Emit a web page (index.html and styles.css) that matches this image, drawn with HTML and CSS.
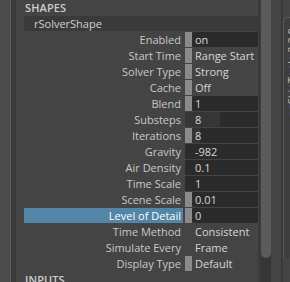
FILE: index.html
```html
<!DOCTYPE html>
<html>
<head>
<meta charset="utf-8">
<link rel="stylesheet" href="styles.css">
</head>
<body>
<div class="app">
  <div class="edge"></div>
  <div class="gutter"></div>
  <div class="panel">
    <div class="section-title">SHAPES</div>
    <div class="node-bar">rSolverShape</div>
    <div class="attrs">
      <div class="row"><span class="label">Enabled</span><span class="val"><span class="sw"></span><span class="field">on</span></span></div>
      <div class="row"><span class="label">Start Time</span><span class="val"><span class="sw"></span><span class="plain">Range Start</span></span></div>
      <div class="row"><span class="label">Solver Type</span><span class="val"><span class="sw"></span><span class="plain">Strong</span></span></div>
      <div class="row"><span class="label">Cache</span><span class="val"><span class="sw"></span><span class="plain">Off</span></span></div>
      <div class="row"><span class="label">Blend</span><span class="val"><span class="sw"></span><span class="field">1</span></span></div>
      <div class="row"><span class="label">Substeps</span><span class="val"><span class="field wide"><span class="fill" style="width:35px"></span><span class="txt">8</span></span></span></div>
      <div class="row"><span class="label">Iterations</span><span class="val"><span class="sw"></span><span class="field"><span class="fill" style="width:8px"></span><span class="txt">8</span></span></span></div>
      <div class="row"><span class="label">Gravity</span><span class="val"><span class="field wide">-982</span></span></div>
      <div class="row"><span class="label">Air Density</span><span class="val"><span class="field wide">0.1</span></span></div>
      <div class="row"><span class="label">Time Scale</span><span class="val"><span class="field wide">1</span></span></div>
      <div class="row"><span class="label">Scene Scale</span><span class="val"><span class="sw"></span><span class="field">0.01</span></span></div>
      <div class="row selected"><span class="label">Level of Detail</span><span class="val"><span class="sw"></span><span class="field">0</span></span></div>
      <div class="row"><span class="label">Time Method</span><span class="val"><span class="plain wide">Consistent</span></span></div>
      <div class="row"><span class="label">Simulate Every</span><span class="val"><span class="plain wide">Frame</span></span></div>
      <div class="row"><span class="label">Display Type</span><span class="val"><span class="sw"></span><span class="plain">Default</span></span></div>
    </div>
    <div class="section-title">INPUTS</div>
  </div>
  <div class="scroll"><div class="thumb"></div></div>
  <div class="spacer"></div>
  <div class="sep"></div>
  <div class="tabs"><div class="tab"><span class="tab-text">ngSkinTools 2.2.0</span></div></div>
</div>
</body>
</html>
```

FILE: styles.css
```css
html, body {
  margin: 0;
  padding: 0;
  background: #444444;
  overflow: hidden;
}
body {
  width: 290px;
  height: 282px;
  font-family: "Open Sans", "DejaVu Sans", sans-serif;
  font-size: 11px;
  color: #c8c8c8;
}
.app {
  display: flex;
  width: 290px;
  height: 282px;
  overflow: hidden;
}
.edge {
  width: 10px;
  background: #4b4b4b;
  border-right: 1px solid #5e5e5e;
  flex: none;
}
.gutter {
  width: 5px;
  background: #3b3b3b;
  flex: none;
}
.panel {
  width: 234px;
  padding-left: 8px;
  flex: none;
  background: #444444;
}
.section-title {
  height: 16px;
  line-height: 16px;
  padding-left: 1px;
  font-weight: 600;
  color: #cdcdcd;
  letter-spacing: 0.1px;
}
.node-bar {
  height: 15px;
  line-height: 15px;
  background: #3a3a3a;
  padding-left: 10px;
  color: #d0d0d0;
  margin-bottom: 1px;
}
.attrs {
  display: flex;
  flex-direction: column;
}
.row {
  display: flex;
  height: 16px;
}
.label {
  width: 157px;
  padding-right: 2px;
  height: 15px;
  line-height: 15px;
  text-align: right;
  white-space: nowrap;
}
.row.selected .label {
  background: #5285a6;
  color: #ffffff;
}
.val {
  display: flex;
  margin-left: 2px;
  width: 73px;
  height: 15px;
}
.sw {
  width: 7px;
  height: 15px;
  background: #8a8a8a;
  flex: none;
}
.field {
  position: relative;
  flex: 1;
  height: 15px;
  line-height: 15px;
  background: #2b2b2b;
  border-radius: 2px;
  padding-left: 3px;
  color: #d6d6d6;
  overflow: hidden;
}
.field.wide {
  padding-left: 10px;
}
.fill {
  position: absolute;
  left: 0;
  top: 0;
  bottom: 0;
  background: #363636;
}
.txt {
  position: relative;
}
.plain {
  flex: 1;
  height: 15px;
  line-height: 15px;
  padding-left: 3px;
  color: #d6d6d6;
  white-space: nowrap;
}
.plain.wide {
  padding-left: 10px;
}
.scroll {
  width: 10px;
  border-left: 3px solid #3b3b3b;
  background: #363636;
  flex: none;
}
.thumb {
  height: 258px;
  background: #5b5b5b;
  border-radius: 0 0 5px 5px;
}
.spacer {
  width: 10px;
  flex: none;
  background: #444444;
}
.sep {
  width: 2px;
  flex: none;
  background: #393939;
}
.tabs {
  width: 7px;
  flex: none;
  background: #444444;
  padding-top: 17px;
}
.tab {
  height: 240px;
  border-left: 1px solid #5a5a5a;
  border-top: 1px solid #5a5a5a;
  border-radius: 5px 0 0 0;
  background: #3e3e3e;
  overflow: hidden;
}
.tab-text {
  display: block;
  writing-mode: vertical-rl;
  transform: rotate(180deg);
  margin-left: 1px;
  margin-top: 10px;
  height: 130px;
  text-align: end;
  color: #bdbdbd;
  white-space: nowrap;
  line-height: 14px;
}
```
